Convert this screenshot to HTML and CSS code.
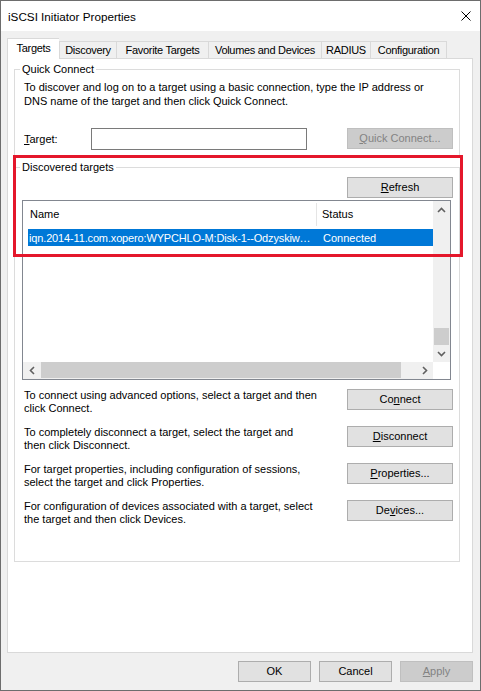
FILE: index.html
```html
<!DOCTYPE html>
<html lang="en">
<head>
    <meta charset="UTF-8">
    <meta name="viewport" content="width=device-width, initial-scale=1.0">
    <title>iSCSI Initiator Properties</title>
    <link rel="stylesheet" href="styles.css">
</head>
<body>
    <div class="window">
        <div class="titlebar">
            <span class="title">iSCSI Initiator Properties</span>
            <span class="close">
                <svg width="10" height="10" viewBox="0 0 10 10"><path d="M0.5 0.5 L9.5 9.5 M9.5 0.5 L0.5 9.5" stroke="#000" stroke-width="1" fill="none"/></svg>
            </span>
        </div>

        <div class="dialog">
            <div class="tabs">
                <div class="tab active tab-targets">Targets</div>
                <div class="tab tab-discovery">Discovery</div>
                <div class="tab tab-favorite">Favorite Targets</div>
                <div class="tab tab-volumes">Volumes and Devices</div>
                <div class="tab tab-radius">RADIUS</div>
                <div class="tab tab-config">Configuration</div>
            </div>

            <div class="panel">
                <fieldset class="group quick">
                    <legend>Quick Connect</legend>
                    <p class="note">To discover and log on to a target using a basic connection, type the IP address or<br>DNS name of the target and then click Quick Connect.</p>
                    <div class="target-row">
                        <label for="target"><u>T</u>arget:</label>
                        <input id="target" type="text">
                        <button class="btn wide" disabled><u>Q</u>uick Connect...</button>
                    </div>
                </fieldset>

                <fieldset class="group discovered">
                    <legend>Discovered tar<u>g</u>ets</legend>
                    <div class="refresh-row">
                        <button class="btn wide"><u>R</u>efresh</button>
                    </div>

                    <div class="listview">
                        <div class="list-body">
                            <div class="list-head">
                                <div class="col-name">Name</div>
                                <div class="col-status">Status</div>
                            </div>
                            <div class="list-row selected">
                                <div class="col-name">iqn.2014-11.com.xopero:WYPCHLO-M:Disk-1--Odzyskiw…</div>
                                <div class="col-status">Connected</div>
                            </div>
                        </div>
                        <div class="vscroll">
                            <div class="arrow">
                                <svg width="9" height="6" viewBox="0 0 9 6"><polyline points="1,5 4.5,1.5 8,5" fill="none" stroke="#606060" stroke-width="1.6"/></svg>
                            </div>
                            <div class="track"></div>
                            <div class="vthumb"></div>
                            <div class="arrow">
                                <svg width="9" height="6" viewBox="0 0 9 6"><polyline points="1,1 4.5,4.5 8,1" fill="none" stroke="#606060" stroke-width="1.6"/></svg>
                            </div>
                        </div>
                        <div class="hscroll">
                            <div class="arrow">
                                <svg width="6" height="9" viewBox="0 0 6 9"><polyline points="5,1 1.5,4.5 5,8" fill="none" stroke="#606060" stroke-width="1.6"/></svg>
                            </div>
                            <div class="hthumb"></div>
                            <div class="track"></div>
                            <div class="arrow">
                                <svg width="6" height="9" viewBox="0 0 6 9"><polyline points="1,1 4.5,4.5 1,8" fill="none" stroke="#606060" stroke-width="1.6"/></svg>
                            </div>
                        </div>
                        <div class="corner"></div>
                    </div>

                    <div class="actions">
                        <div class="action">
                            <p>To connect using advanced options, select a target and then<br>click Connect.</p>
                            <button class="btn wide">Co<u>n</u>nect</button>
                        </div>
                        <div class="action">
                            <p>To completely disconnect a target, select the target and<br>then click Disconnect.</p>
                            <button class="btn wide"><u>D</u>isconnect</button>
                        </div>
                        <div class="action">
                            <p>For target properties, including configuration of sessions,<br>select the target and click Properties.</p>
                            <button class="btn wide"><u>P</u>roperties...</button>
                        </div>
                        <div class="action">
                            <p>For configuration of devices associated with a target, select<br>the target and then click Devices.</p>
                            <button class="btn wide">De<u>v</u>ices...</button>
                        </div>
                    </div>
                </fieldset>
            </div>

            <div class="footer">
                <button class="btn small">OK</button>
                <button class="btn small">Cancel</button>
                <button class="btn small" disabled><u>A</u>pply</button>
            </div>
        </div>

        <!-- highlight drawn over the discovered targets area -->
        <div class="mark"></div>
    </div>
</body>
</html>
```

FILE: styles.css
```css
* {
    box-sizing: border-box;
}
body {
    margin: 0;
    font-family: "Liberation Sans", Arial, sans-serif;
    font-size: 11px;
    color: #000;
    background: #fff;
}
.window {
    position: relative;
    width: 481px;
    height: 691px;
    border: 1px solid #6d6d6d;
    background: #f0f0f0;
    display: flex;
    flex-direction: column;
}
.titlebar {
    height: 30px;
    flex-shrink: 0;
    background: #fff;
    display: flex;
    align-items: center;
    justify-content: space-between;
    padding: 0 9px 0 7px;
}
.title {
    font-size: 11.7px;
}
.close svg {
    display: block;
}
.dialog {
    flex: 1;
    display: flex;
    flex-direction: column;
    padding: 7px 7px 0 6px;
}

/* tab strip */
.tabs {
    display: flex;
    align-items: flex-end;
    height: 20px;
    position: relative;
    z-index: 1;
}
.tab {
    height: 17px;
    line-height: 16px;
    text-align: center;
    white-space: nowrap;
    letter-spacing: -0.3px;
    border: 1px solid #d9d9d9;
    border-right: 0;
    border-bottom: 0;
    background: #f0f0f0;
}
.tab:last-child {
    border-right: 1px solid #d9d9d9;
}
.tab.active {
    height: 21px;
    line-height: 19px;
    margin-bottom: -1px;
    background: #fff;
}
.tab-targets { width: 52px; }
.tab-discovery { width: 57px; }
.tab-favorite { width: 92px; }
.tab-volumes { width: 113px; }
.tab-radius { width: 49px; }
.tab-config { width: 77px; }

.panel {
    height: 595px;
    background: #fff;
    border: 1px solid #d9d9d9;
    padding: 4px 12px 0 6px;
}

/* group boxes */
.group {
    margin: 0;
    padding: 0;
    min-width: 0;
    border: 1px solid #dcdcdc;
}
.group legend {
    margin-left: 5px;
    padding: 0 2px;
    line-height: 13px;
}
.quick {
    padding-bottom: 6px;
}
.note {
    margin: 4px 0 0 9px;
    line-height: 14px;
}
.target-row {
    display: flex;
    align-items: flex-start;
    margin-top: 20px;
    padding: 0 6px 0 9px;
}
.target-row label {
    width: 67px;
    line-height: 22px;
}
.target-row input {
    width: 216px;
    height: 22px;
    border: 1px solid #7a7a7a;
    padding: 0 3px;
    font: inherit;
}
.target-row .btn {
    margin-left: auto;
}

.discovered {
    margin-top: 4px;
    padding-bottom: 35px;
}
.refresh-row {
    display: flex;
    justify-content: flex-end;
    padding: 3px 6px 0 0;
}

/* list view */
.listview {
    height: 180px;
    margin: 2px 8px 0 7px;
    border: 1px solid #828790;
    display: grid;
    grid-template-columns: 1fr 17px;
    grid-template-rows: 1fr 17px;
    background: #fff;
}
.list-body {
    overflow: hidden;
}
.list-head {
    display: flex;
    height: 25px;
    line-height: 23px;
    padding-top: 2px;
}
.list-head .col-name {
    width: 294px;
    padding-left: 7px;
    border-right: 1px solid #e5e5e5;
}
.list-head .col-status {
    padding-left: 5px;
}
.list-row {
    display: flex;
    height: 17px;
    line-height: 18px;
    margin: 3px 0 0 5px;
    white-space: nowrap;
}
.list-row .col-name {
    width: 294px;
    padding-left: 1px;
    letter-spacing: -0.15px;
    overflow: hidden;
}
.list-row .col-status {
    padding-left: 1px;
}
.list-row.selected {
    background: #0078d7;
    color: #fff;
}

.vscroll {
    display: flex;
    flex-direction: column;
    background: #f0f0f0;
}
.hscroll {
    display: flex;
    background: #f0f0f0;
}
.arrow {
    width: 17px;
    height: 17px;
    flex-shrink: 0;
    display: flex;
    align-items: center;
    justify-content: center;
}
.track {
    flex: 1;
}
.vthumb {
    height: 17px;
    margin: 0 1px;
    background: #cdcdcd;
}
.hthumb {
    width: 360px;
    margin: 0 0 1px 1px;
    background: #cdcdcd;
}
.corner {
    background: #fff;
}

/* actions under the list */
.actions {
    margin-top: 9px;
    padding: 0 6px 0 9px;
}
.action {
    display: flex;
    justify-content: space-between;
    align-items: flex-start;
}
.action + .action {
    margin-top: 11px;
}
.action p {
    margin: 0;
    line-height: 13px;
    white-space: nowrap;
}

/* push buttons */
.btn {
    height: 21px;
    padding: 0;
    font: inherit;
    color: #000;
    background: #e1e1e1;
    border: 1px solid #adadad;
    line-height: 19px;
    flex-shrink: 0;
}
.btn.wide {
    width: 106px;
}
.btn.small {
    width: 73px;
}
.btn:disabled {
    background: #cccccc;
    border-color: #bfbfbf;
    color: #838383;
}

.footer {
    display: flex;
    justify-content: flex-end;
    gap: 8px;
    padding-top: 8px;
}

.mark {
    position: absolute;
    left: 12px;
    top: 154px;
    width: 450px;
    height: 102px;
    border: 3px solid #e4172b;
}
```
